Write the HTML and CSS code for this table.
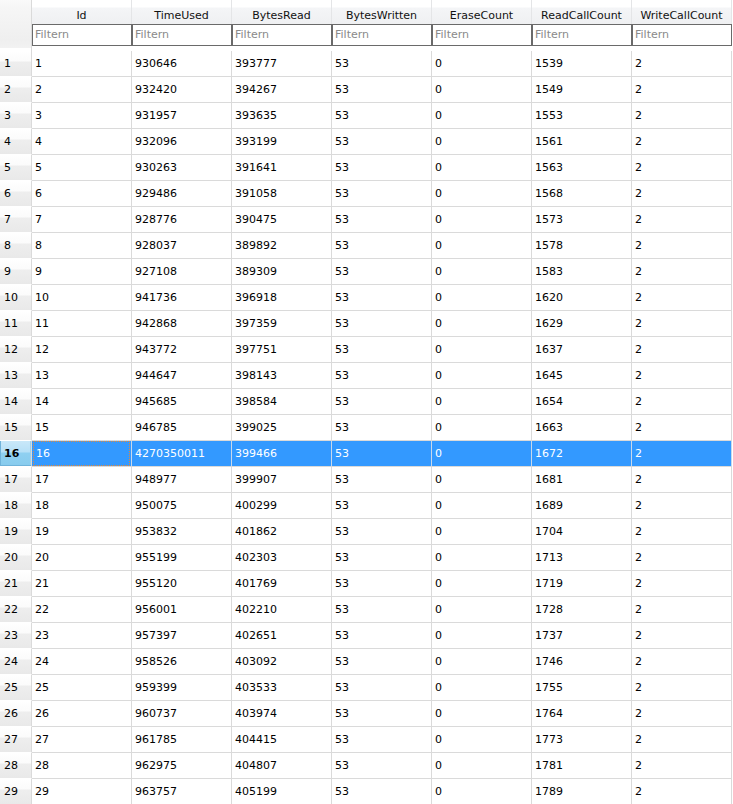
FILE: index.html
```html
<!DOCTYPE html>
<html>
<head>
<meta charset="utf-8">
<link rel="stylesheet" href="styles.css">
</head>
<body>
<table class="grid">
<colgroup><col class="c-rh"><col class="c"><col class="c"><col class="c"><col class="c"><col class="c"><col class="c"><col class="c"></colgroup>
<thead>
<tr class="hrow">
<th class="corner" rowspan="2"></th>
<th class="ch">Id</th><th class="ch">TimeUsed</th><th class="ch">BytesRead</th><th class="ch">BytesWritten</th><th class="ch">EraseCount</th><th class="ch">ReadCallCount</th><th class="ch">WriteCallCount</th>
</tr>
<tr class="frow">
<td class="fc"><div class="filter">Filtern</div></td>
<td class="fc"><div class="filter">Filtern</div></td>
<td class="fc"><div class="filter">Filtern</div></td>
<td class="fc"><div class="filter">Filtern</div></td>
<td class="fc"><div class="filter">Filtern</div></td>
<td class="fc"><div class="filter">Filtern</div></td>
<td class="fc"><div class="filter">Filtern</div></td>
</tr>
</thead>
<tbody>
<tr><th class="rh">1</th><td>1</td><td>930646</td><td>393777</td><td>53</td><td>0</td><td>1539</td><td>2</td></tr>
<tr><th class="rh">2</th><td>2</td><td>932420</td><td>394267</td><td>53</td><td>0</td><td>1549</td><td>2</td></tr>
<tr><th class="rh">3</th><td>3</td><td>931957</td><td>393635</td><td>53</td><td>0</td><td>1553</td><td>2</td></tr>
<tr><th class="rh">4</th><td>4</td><td>932096</td><td>393199</td><td>53</td><td>0</td><td>1561</td><td>2</td></tr>
<tr><th class="rh">5</th><td>5</td><td>930263</td><td>391641</td><td>53</td><td>0</td><td>1563</td><td>2</td></tr>
<tr><th class="rh">6</th><td>6</td><td>929486</td><td>391058</td><td>53</td><td>0</td><td>1568</td><td>2</td></tr>
<tr><th class="rh">7</th><td>7</td><td>928776</td><td>390475</td><td>53</td><td>0</td><td>1573</td><td>2</td></tr>
<tr><th class="rh">8</th><td>8</td><td>928037</td><td>389892</td><td>53</td><td>0</td><td>1578</td><td>2</td></tr>
<tr><th class="rh">9</th><td>9</td><td>927108</td><td>389309</td><td>53</td><td>0</td><td>1583</td><td>2</td></tr>
<tr><th class="rh">10</th><td>10</td><td>941736</td><td>396918</td><td>53</td><td>0</td><td>1620</td><td>2</td></tr>
<tr><th class="rh">11</th><td>11</td><td>942868</td><td>397359</td><td>53</td><td>0</td><td>1629</td><td>2</td></tr>
<tr><th class="rh">12</th><td>12</td><td>943772</td><td>397751</td><td>53</td><td>0</td><td>1637</td><td>2</td></tr>
<tr><th class="rh">13</th><td>13</td><td>944647</td><td>398143</td><td>53</td><td>0</td><td>1645</td><td>2</td></tr>
<tr><th class="rh">14</th><td>14</td><td>945685</td><td>398584</td><td>53</td><td>0</td><td>1654</td><td>2</td></tr>
<tr><th class="rh">15</th><td>15</td><td>946785</td><td>399025</td><td>53</td><td>0</td><td>1663</td><td>2</td></tr>
<tr class="sel"><th class="rh">16</th><td class="focus"><div class="focusbox">16</div></td><td>4270350011</td><td>399466</td><td>53</td><td>0</td><td>1672</td><td>2</td></tr>
<tr><th class="rh">17</th><td>17</td><td>948977</td><td>399907</td><td>53</td><td>0</td><td>1681</td><td>2</td></tr>
<tr><th class="rh">18</th><td>18</td><td>950075</td><td>400299</td><td>53</td><td>0</td><td>1689</td><td>2</td></tr>
<tr><th class="rh">19</th><td>19</td><td>953832</td><td>401862</td><td>53</td><td>0</td><td>1704</td><td>2</td></tr>
<tr><th class="rh">20</th><td>20</td><td>955199</td><td>402303</td><td>53</td><td>0</td><td>1713</td><td>2</td></tr>
<tr><th class="rh">21</th><td>21</td><td>955120</td><td>401769</td><td>53</td><td>0</td><td>1719</td><td>2</td></tr>
<tr><th class="rh">22</th><td>22</td><td>956001</td><td>402210</td><td>53</td><td>0</td><td>1728</td><td>2</td></tr>
<tr><th class="rh">23</th><td>23</td><td>957397</td><td>402651</td><td>53</td><td>0</td><td>1737</td><td>2</td></tr>
<tr><th class="rh">24</th><td>24</td><td>958526</td><td>403092</td><td>53</td><td>0</td><td>1746</td><td>2</td></tr>
<tr><th class="rh">25</th><td>25</td><td>959399</td><td>403533</td><td>53</td><td>0</td><td>1755</td><td>2</td></tr>
<tr><th class="rh">26</th><td>26</td><td>960737</td><td>403974</td><td>53</td><td>0</td><td>1764</td><td>2</td></tr>
<tr><th class="rh">27</th><td>27</td><td>961785</td><td>404415</td><td>53</td><td>0</td><td>1773</td><td>2</td></tr>
<tr><th class="rh">28</th><td>28</td><td>962975</td><td>404807</td><td>53</td><td>0</td><td>1781</td><td>2</td></tr>
<tr><th class="rh">29</th><td>29</td><td>963757</td><td>405199</td><td>53</td><td>0</td><td>1789</td><td>2</td></tr>
</tbody>
</table>
</body>
</html>
```
FILE: styles.css
```css
html, body {
  margin: 0;
  padding: 0;
  background: #ffffff;
  overflow: hidden;
}
body {
  font-family: "DejaVu Sans", Verdana, sans-serif;
  font-size: 11px;
  color: #000;
}
.grid {
  border-collapse: separate;
  border-spacing: 0;
  table-layout: fixed;
  width: 732px;
}
.c-rh { width: 32px; }
.c { width: 100px; }

.grid th, .grid td {
  box-sizing: border-box;
  padding: 0;
  font-weight: normal;
  white-space: nowrap;
  overflow: hidden;
}

/* header */
.grid .hrow .ch {
  height: 24px;
  text-align: center;
  vertical-align: top;
  padding-top: 9px;
  line-height: 13px;
  color: #111;
  background: linear-gradient(to bottom, #ffffff 0, #ffffff 7px, #f4f5f7 8px, #eff0f2 24px);
  border-right: 1px solid #e4e5e7;
}
.grid .corner {
  border-right: 1px solid #dadada;
  background: linear-gradient(to bottom, #fafafa 0, #f6f6f6 8px, #efefef 40px, #f2f2f2 48px, #ffffff 48px, #ffffff 100%);
}
.grid .frow .fc {
  height: 27px;
  vertical-align: top;
}
.filter {
  box-sizing: border-box;
  height: 22px;
  border: 1px solid #6a6a6a;
  color: #8a8a8a;
  padding-left: 2px;
  line-height: 20px;
  background: #fff;
}

/* body */
.grid tbody td {
  height: 26px;
  border-right: 1px solid #dadada;
  border-bottom: 1px solid #dadada;
  padding-left: 3px;
  line-height: 13px;
  vertical-align: middle;
}
.grid tbody .rh {
  height: 26px;
  text-align: left;
  padding-left: 4px;
  border-right: 1px solid #dadada;
  border-bottom: 1px solid #ffffff;
  background: linear-gradient(to bottom, #ffffff 0, #fbfbfb 10px, #eeeeee 11px, #e9e9e9 100%);
  vertical-align: middle;
  line-height: 13px;
}

/* selected row */
.grid .sel td {
  background: #3399ff;
  color: #ffffff;
  border-right-color: #c8d8ea;
}
.grid .sel .rh {
  font-weight: bold;
  background: linear-gradient(to bottom, #c9e8f9 0, #b6e0f7 11px, #8fd0f1 12px, #87cbed 100%);
  box-shadow: inset 1px 0 0 #6fb3da, inset 0 -1px 0 #6fb3da, inset -1px 0 0 #9ccfea;
}
.grid .sel .focus {
  padding: 0;
  vertical-align: top;
}
.focusbox {
  box-sizing: border-box;
  height: 25px;
  margin: 0 1px 0 1px;
  border: 1px dotted #e0893c;
  padding-left: 2px;
  line-height: 23px;
}
```
